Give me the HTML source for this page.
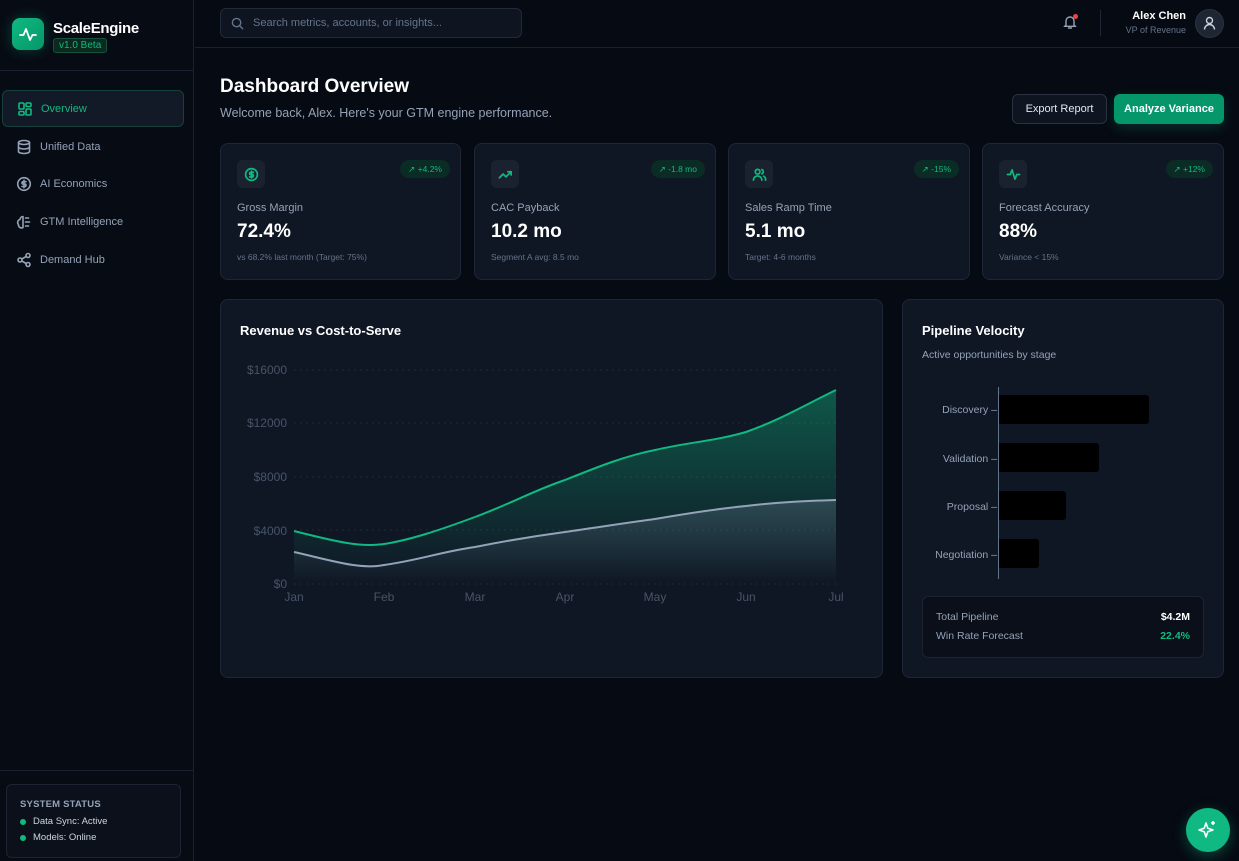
<!DOCTYPE html>
<html><head><meta charset="utf-8"><style>
*{box-sizing:border-box;margin:0;padding:0}
body{width:1239px;height:861px;background:#060a13;font-family:"Liberation Sans",sans-serif;color:#fff;position:relative;overflow:hidden}
.side{position:absolute;left:0;top:0;width:194px;height:861px;background:#070b14;border-right:1px solid #1a2130}
.logo{position:absolute;left:12px;top:18px;width:32px;height:32px;border-radius:8px;background:linear-gradient(135deg,#10b981,#059669);box-shadow:0 0 14px rgba(16,185,129,.3)}
.brand{position:absolute;left:53px;top:20px;font-size:15px;font-weight:bold;letter-spacing:-.3px}
.ver{position:absolute;left:53px;top:38px;font-size:10px;color:#10b981;background:#0a2a20;border:1px solid #14523c;border-radius:3px;padding:1px 5px}
.sep{position:absolute;left:0;right:0;top:70px;border-top:1px solid #1a2130}
.nav{position:absolute;left:2px;width:182px;height:37px;display:flex;align-items:center;padding-left:14px;font-size:11px;color:#94a3b8;gap:8px}
.nav.act{background:#111a26;border:1px solid #16403a;border-radius:6px;color:#10b981}
.nav svg{width:16px;height:16px;fill:none;stroke:currentColor;stroke-width:1.6;stroke-linecap:round;stroke-linejoin:round}
.status{position:absolute;left:6px;top:784px;width:175px;height:74px;border:1px solid #1c2333;border-radius:6px;background:#0b101b;padding:14px 13px}
.status h4{font-size:9.5px;color:#94a3b8;letter-spacing:.2px}
.status p{font-size:9.5px;color:#cbd5e1;margin-top:6px;display:flex;align-items:center;gap:7px}
.status p i{width:6px;height:6px;border-radius:50%;background:#10b981;display:inline-block}
.top{position:absolute;left:195px;right:0;top:0;height:48px;border-bottom:1px solid #1a2130}
.search{position:absolute;left:25px;top:8px;width:302px;height:30px;border:1px solid #222a3a;background:#0f1520;border-radius:6px;font-size:11px;color:#64748b;padding:8px 0 0 32px}
.card{position:absolute;background:#0f1624;border:1px solid #1f2737;border-radius:8px}
.k .ic{position:absolute;left:16px;top:16px;width:28px;height:28px;border-radius:6px;background:#1a2230;display:flex;align-items:center;justify-content:center;color:#10b981}
.k .ic svg{width:15px;height:15px;fill:none;stroke:currentColor;stroke-width:1.8;stroke-linecap:round;stroke-linejoin:round}
.k .b{position:absolute;right:10px;top:16px;height:18px;border-radius:9px;background:#0b2b25;color:#10b981;font-size:8.5px;padding:4px 8px}
.k .l{position:absolute;left:16px;top:58px;font-size:11px;color:#94a3b8}
.k .v{position:absolute;left:16px;top:77px;font-size:19px;font-weight:bold}
.k .s{position:absolute;left:16px;top:108px;font-size:8.5px;color:#64748b}
.btn{position:absolute;top:94px;height:30px;border-radius:6px;font-size:11px;display:flex;align-items:center;justify-content:center}
</style></head><body>
<div class="side">
 <div class="logo"><svg width="32" height="32" viewBox="0 0 32 32"><path d="M8 17h3.5l2.5-6 4 11 2.5-5H24" fill="none" stroke="#fff" stroke-width="1.8" stroke-linecap="round" stroke-linejoin="round"/></svg></div>
 <div class="brand">ScaleEngine</div>
 <div class="ver">v1.0 Beta</div>
 <div class="sep"></div>
 <div class="nav act" style="top:90px"><svg viewBox="0 0 16 16"><rect x="2" y="2" width="5" height="6" rx="1"/><rect x="9" y="2" width="5" height="3.5" rx="1"/><rect x="9" y="8" width="5" height="6" rx="1"/><rect x="2" y="10.5" width="5" height="3.5" rx="1"/></svg>Overview</div>
 <div class="nav" style="top:128px"><svg viewBox="0 0 16 16"><ellipse cx="8" cy="3.5" rx="5.5" ry="2"/><path d="M2.5 3.5v9c0 1.1 2.5 2 5.5 2s5.5-.9 5.5-2v-9M2.5 8c0 1.1 2.5 2 5.5 2s5.5-.9 5.5-2"/></svg>Unified Data</div>
 <div class="nav" style="top:165px"><svg viewBox="0 0 16 16"><circle cx="8" cy="8" r="6.3"/><path d="M10 5.7H7.2a1.2 1.2 0 000 2.4h1.6a1.2 1.2 0 010 2.4H6M8 4.3v7.4"/></svg>AI Economics</div>
 <div class="nav" style="top:203px"><svg viewBox="0 0 16 16"><path d="M7 2.5a3 3 0 00-3 3 3 3 0 00-1.5 5 3 3 0 004.5 3V2.5zM9.5 4h3M9.5 8h4M9.5 12h3"/></svg>GTM Intelligence</div>
 <div class="nav" style="top:241px"><svg viewBox="0 0 16 16"><circle cx="12" cy="3.5" r="2"/><circle cx="4" cy="8" r="2"/><circle cx="12" cy="12.5" r="2"/><path d="M5.8 7l4.4-2.5M5.8 9l4.4 2.5"/></svg>Demand Hub</div>
 <div style="position:absolute;left:0;right:0;top:770px;border-top:1px solid #1a2130"></div>
 <div class="status"><h4>SYSTEM STATUS</h4><p><i></i>Data Sync: Active</p><p style="margin-top:5px"><i></i>Models: Online</p></div>
</div>
<div class="top">
 <div class="search"><svg style="position:absolute;left:10px;top:8px" width="13" height="13" viewBox="0 0 14 14" fill="none" stroke="#64748b" stroke-width="1.5"><circle cx="6" cy="6" r="4.5"/><path d="M9.5 9.5L13 13"/></svg>Search metrics, accounts, or insights...</div>
 <svg style="position:absolute;left:867px;top:14px" width="16" height="16" viewBox="0 0 16 16" fill="none" stroke="#94a3b8" stroke-width="1.4" stroke-linecap="round"><path d="M4 11V7a4 4 0 018 0v4l1.2 1.3H2.8zM6.5 14h3"/></svg>
 <div style="position:absolute;left:878px;top:14px;width:5px;height:5px;border-radius:50%;background:#ef4444"></div>
 <div style="position:absolute;left:905px;top:10px;height:26px;border-left:1px solid #1f2737"></div>
 <div style="position:absolute;right:53px;top:10px;text-align:right"><div style="font-size:11px;font-weight:bold">Alex Chen</div><div style="font-size:9px;color:#64748b;margin-top:3px">VP of Revenue</div></div>
 <div style="position:absolute;left:1000px;top:9px;width:29px;height:29px;border-radius:50%;background:#1e2533;border:1px solid #2a3242"><svg width="27" height="27" viewBox="0 0 27 27" fill="none" stroke="#cbd5e1" stroke-width="1.4"><circle cx="13.5" cy="10.5" r="3"/><path d="M8.5 19.5a5 5 0 0110 0"/></svg></div>
</div>
<div style="position:absolute;left:220px;top:76px;font-size:19px;font-weight:bold">Dashboard Overview</div>
<div style="position:absolute;left:220px;top:106px;font-size:12.5px;color:#94a3b8">Welcome back, Alex. Here's your GTM engine performance.</div>
<div class="btn" style="left:1012px;width:95px;border:1px solid #2a3242;background:#0f1520;color:#e2e8f0">Export Report</div>
<div class="btn" style="left:1114px;width:110px;background:#059669;font-weight:bold;box-shadow:0 4px 12px rgba(16,185,129,.2)">Analyze Variance</div>

<div class="card k" style="left:220px;top:143px;width:241px;height:137px"><div class="ic"><svg viewBox="0 0 16 16"><circle cx="8" cy="8" r="6.3"/><path d="M10 5.7H7.2a1.2 1.2 0 000 2.4h1.6a1.2 1.2 0 010 2.4H6M8 4.3v7.4"/></svg></div><div class="b">↗ +4.2%</div><div class="l">Gross Margin</div><div class="v">72.4%</div><div class="s">vs 68.2% last month (Target: 75%)</div></div>
<div class="card k" style="left:474px;top:143px;width:242px;height:137px"><div class="ic"><svg viewBox="0 0 16 16"><path d="M1.5 11.5l4-4 3 3 5.5-5.5M10.5 5h3.5v3.5"/></svg></div><div class="b">↗ -1.8 mo</div><div class="l">CAC Payback</div><div class="v">10.2 mo</div><div class="s">Segment A avg: 8.5 mo</div></div>
<div class="card k" style="left:728px;top:143px;width:242px;height:137px"><div class="ic"><svg viewBox="0 0 16 16"><circle cx="6" cy="5" r="2.5"/><path d="M1.5 14a4.5 4.5 0 019 0M10.5 2.7a2.5 2.5 0 010 4.6M12.5 9.8A4.5 4.5 0 0114.5 14"/></svg></div><div class="b">↗ -15%</div><div class="l">Sales Ramp Time</div><div class="v">5.1 mo</div><div class="s">Target: 4-6 months</div></div>
<div class="card k" style="left:982px;top:143px;width:242px;height:137px"><div class="ic"><svg viewBox="0 0 16 16"><path d="M1.5 8h3l2-5 3 10 2-5h3"/></svg></div><div class="b">↗ +12%</div><div class="l">Forecast Accuracy</div><div class="v">88%</div><div class="s">Variance &lt; 15%</div></div>

<div class="card" style="left:220px;top:299px;width:663px;height:379px">
 <div style="position:absolute;left:19px;top:23px;font-size:13px;font-weight:bold">Revenue vs Cost-to-Serve</div>
</div>
<svg style="position:absolute;left:0;top:0" width="1239" height="861">
 <defs>
  <linearGradient id="g1" x1="0" y1="0" x2="0" y2="1"><stop offset="0" stop-color="#10b981" stop-opacity=".4"/><stop offset="1" stop-color="#10b981" stop-opacity="0"/></linearGradient>
  <linearGradient id="g2" x1="0" y1="0" x2="0" y2="1"><stop offset="0" stop-color="#64748b" stop-opacity=".35"/><stop offset="1" stop-color="#64748b" stop-opacity="0"/></linearGradient>
 </defs>
 <g stroke="#1f2a3a" stroke-dasharray="2 4">
  <line x1="294" x2="836" y1="370" y2="370"/><line x1="294" x2="836" y1="423" y2="423"/><line x1="294" x2="836" y1="477" y2="477"/><line x1="294" x2="836" y1="530" y2="530"/><line x1="294" x2="836" y1="584" y2="584"/>
 </g>
 <g font-size="12" fill="#475569" text-anchor="end"><text x="287" y="374">$16000</text><text x="287" y="427">$12000</text><text x="287" y="481">$8000</text><text x="287" y="535">$4000</text><text x="287" y="588">$0</text></g>
 <g font-size="12" fill="#475569" text-anchor="middle"><text x="294" y="601">Jan</text><text x="384" y="601">Feb</text><text x="475" y="601">Mar</text><text x="565" y="601">Apr</text><text x="655" y="601">May</text><text x="746" y="601">Jun</text><text x="836" y="601">Jul</text></g>
 <path d="M294 531C330 540 360 548 384 544C410 540 440 530 475 517C510 504 535 490 565 480C600 466 625 456 655 450C690 442 715 441 746 432C780 420 805 405 836 390L836 584L294 584Z" fill="url(#g1)"/>
 <path d="M294 531C330 540 360 548 384 544C410 540 440 530 475 517C510 504 535 490 565 480C600 466 625 456 655 450C690 442 715 441 746 432C780 420 805 405 836 390" fill="none" stroke="#10b981" stroke-width="2"/>
 <path d="M294 552C330 560 360 570 384 565C420 560 440 552 475 547C510 540 535 536 565 532C600 527 625 523 655 519C690 513 715 509 746 506C780 502 805 501 836 500L836 584L294 584Z" fill="url(#g2)"/>
 <path d="M294 552C330 560 360 570 384 565C420 560 440 552 475 547C510 540 535 536 565 532C600 527 625 523 655 519C690 513 715 509 746 506C780 502 805 501 836 500" fill="none" stroke="#94a3b8" stroke-width="2"/>
</svg>

<div class="card" style="left:902px;top:299px;width:322px;height:379px">
 <div style="position:absolute;left:19px;top:23px;font-size:13px;font-weight:bold">Pipeline Velocity</div>
 <div style="position:absolute;left:19px;top:49px;font-size:10.5px;color:#94a3b8">Active opportunities by stage</div>
 <div style="position:absolute;left:95px;top:87px;height:192px;border-left:1px solid #64748b"></div>
 <div style="position:absolute;right:226px;top:104px;font-size:10.5px;color:#94a3b8">Discovery –</div>
 <div style="position:absolute;right:226px;top:153px;font-size:10.5px;color:#94a3b8">Validation –</div>
 <div style="position:absolute;right:226px;top:201px;font-size:10.5px;color:#94a3b8">Proposal –</div>
 <div style="position:absolute;right:226px;top:249px;font-size:10.5px;color:#94a3b8">Negotiation –</div>
 <div style="position:absolute;left:96px;top:95px;width:150px;height:29px;background:#000;border-radius:0 3px 3px 0"></div>
 <div style="position:absolute;left:96px;top:143px;width:100px;height:29px;background:#000;border-radius:0 3px 3px 0"></div>
 <div style="position:absolute;left:96px;top:191px;width:67px;height:29px;background:#000;border-radius:0 3px 3px 0"></div>
 <div style="position:absolute;left:96px;top:239px;width:40px;height:29px;background:#000;border-radius:0 3px 3px 0"></div>
 <div style="position:absolute;left:19px;top:296px;width:282px;height:62px;background:#0a0f1a;border:1px solid #1c2433;border-radius:6px;font-size:10.5px;color:#94a3b8">
  <div style="position:absolute;left:13px;top:14px">Total Pipeline</div><div style="position:absolute;right:13px;top:14px;color:#fff;font-weight:bold">$4.2M</div>
  <div style="position:absolute;left:13px;top:33px">Win Rate Forecast</div><div style="position:absolute;right:13px;top:33px;color:#10b981;font-weight:bold">22.4%</div>
 </div>
</div>
<div style="position:absolute;left:1186px;top:808px;width:44px;height:44px;border-radius:50%;background:#10b981;box-shadow:0 4px 14px rgba(16,185,129,.35)"><svg width="44" height="44" viewBox="0 0 44 44" fill="none" stroke="#fff" stroke-width="1.6" stroke-linejoin="round"><path d="M20 15l1.8 5.2L27 22l-5.2 1.8L20 29l-1.8-5.2L13 22l5.2-1.8z"/><path d="M27 13v4M25 15h4"/></svg></div>
</body></html>
